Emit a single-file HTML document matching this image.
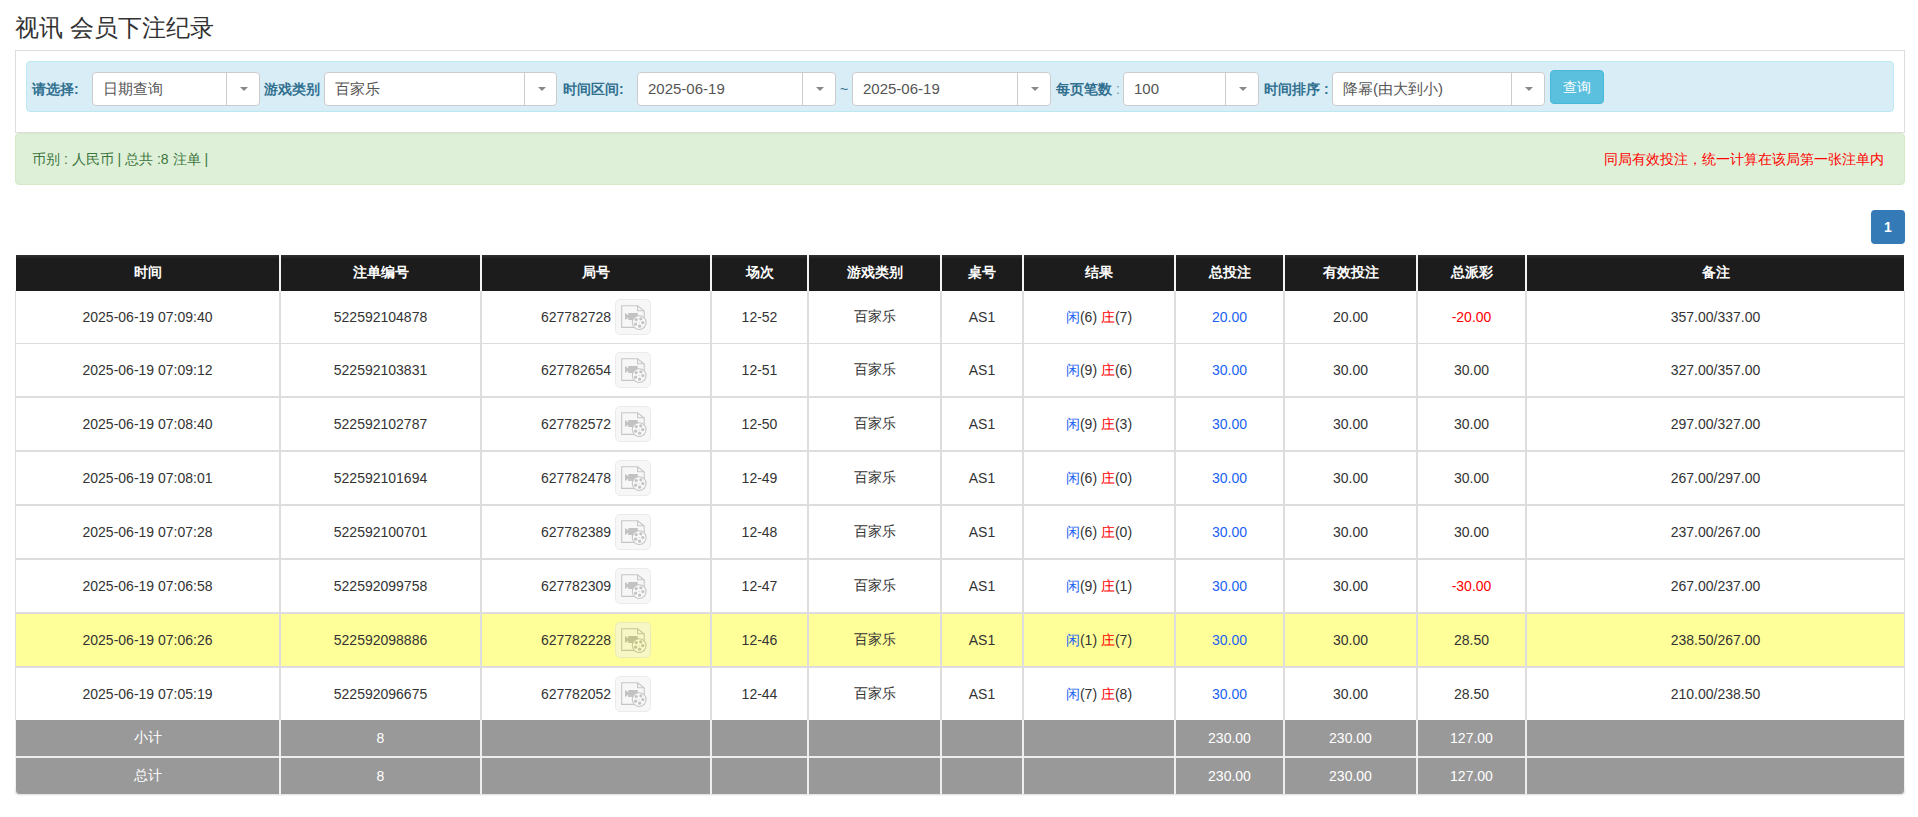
<!DOCTYPE html>
<html><head><meta charset="utf-8">
<style>
*{box-sizing:border-box;}
html,body{margin:0;padding:0;background:#fff;}
body{font-family:"Liberation Sans",sans-serif;font-size:14px;color:#333;width:1918px;height:817px;overflow:hidden;position:relative;}
.abs{position:absolute;}
.title{left:15px;top:13px;font-size:24px;line-height:30px;color:#333;white-space:nowrap;}
.panel{left:15px;top:50px;width:1890px;height:83px;border:1px solid #ddd;border-radius:0;}
.filter{left:26px;top:61px;width:1868px;height:51px;background:#d9edf7;border:1px solid #bce8f1;border-radius:4px;}
.lbl{position:absolute;top:81px;font-size:14px;line-height:17px;font-weight:bold;color:#31708f;white-space:nowrap;}
.sel{position:absolute;top:72px;height:34px;background:#fff;border:1px solid #ccc;border-radius:4px;}
.sel .t{position:absolute;left:10px;top:7px;font-size:15px;line-height:18px;color:#555;white-space:nowrap;}
.sel .d{position:absolute;top:0;bottom:0;width:1px;background:#ccc;}
.sel .c{position:absolute;top:14px;width:0;height:0;border-left:4px solid transparent;border-right:4px solid transparent;border-top:4px solid #888;}
.btn{left:1550px;top:70px;width:54px;height:34px;background:#5bc0de;border:1px solid #46b8da;border-radius:4px;color:#fff;font-size:14px;line-height:32px;text-align:center;}
.alert{left:15px;top:133px;width:1890px;height:52px;background:#dff0d8;border:1px solid #d6e9c6;border-radius:4px;}
.alert .l{position:absolute;left:16px;top:17px;font-size:14px;line-height:17px;color:#3c763d;white-space:nowrap;}
.alert .r{position:absolute;right:20px;top:17px;font-size:14px;line-height:17px;color:#f00;white-space:nowrap;}
.page1{left:1871px;top:210px;width:34px;height:34px;background:#337ab7;border-radius:4px;color:#fff;font-weight:bold;font-size:14px;line-height:34px;text-align:center;}
table{position:absolute;left:15px;top:255px;width:1890px;border-collapse:separate;border-spacing:0;table-layout:fixed;}
th{background:linear-gradient(#303030,#1c1c1c 4px);color:#fff;font-size:14px;font-weight:bold;height:36px;text-align:center;border-left:1px solid #f4f4f4;border-right:1px solid #f4f4f4;padding:0;}
th:first-child{border-left:1px solid #fff;}
th:last-child{border-right:1px solid #fff;}
td{height:54px;text-align:center;border-left:1px solid #ddd;border-right:1px solid #ddd;border-bottom:2px solid #ddd;padding:0;font-size:14px;color:#333;}
tr.r1 td{height:53px;border-bottom-width:1px;}
tr.r8 td{height:52px;border-bottom:none;}
tr.hl td{background:#ffff99;}
tr.sum td{background:#999;color:#fff;height:38px;font-size:14px;border-color:#eee;border-bottom-width:2px;}
tr.sum2 td{height:36px;border-bottom:none;}
tr.sum2 td:first-child{border-bottom-left-radius:4px;}
tr.sum2 td:last-child{border-bottom-right-radius:4px;}
.shadow{left:15px;top:787px;width:1890px;height:7px;border-radius:0 0 4px 4px;box-shadow:0 1px 2px rgba(0,0,0,.14);}
.b{color:#1a62f4;}
.rd{color:#f00;}
.ic{display:inline-block;vertical-align:middle;width:36px;height:36px;border:1px solid #d8d8d8;border-radius:5px;background:#f1f1f1;margin-left:4px;position:relative;opacity:.5;}
</style></head><body>
<div class="abs title">视讯 会员下注纪录</div>
<div class="abs panel"></div>
<div class="abs filter"></div>
<div class="lbl" style="left:32px">请选择:</div>
<div class="sel" style="left:92px;width:168px"><span class="t">日期查询</span><span class="d" style="left:133px"></span><span class="c" style="left:147px"></span></div>
<div class="lbl" style="left:264px">游戏类别</div>
<div class="sel" style="left:324px;width:233px"><span class="t">百家乐</span><span class="d" style="left:199px"></span><span class="c" style="left:213px"></span></div>
<div class="lbl" style="left:563px">时间区间:</div>
<div class="sel" style="left:637px;width:199px"><span class="t">2025-06-19</span><span class="d" style="left:164px"></span><span class="c" style="left:178px"></span></div>
<div class="lbl" style="left:840px;font-weight:normal">~</div>
<div class="sel" style="left:852px;width:199px"><span class="t">2025-06-19</span><span class="d" style="left:164px"></span><span class="c" style="left:178px"></span></div>
<div class="lbl" style="left:1056px">每页笔数 <span style="font-weight:normal;color:#6f95aa">:</span></div>
<div class="sel" style="left:1123px;width:136px"><span class="t">100</span><span class="d" style="left:101px"></span><span class="c" style="left:115px"></span></div>
<div class="lbl" style="left:1264px">时间排序 :</div>
<div class="sel" style="left:1332px;width:213px"><span class="t">降幂(由大到小)</span><span class="d" style="left:178px"></span><span class="c" style="left:192px"></span></div>
<div class="abs btn">查询</div>
<div class="abs alert"><span class="l">币别 : 人民币 | 总共 :8 注单 |</span><span class="r">同局有效投注，统一计算在该局第一张注单内</span></div>
<div class="abs page1">1</div>
<div class="abs shadow"></div>
<table>
<colgroup><col style="width:265px"><col style="width:201px"><col style="width:230px"><col style="width:97px"><col style="width:133px"><col style="width:82px"><col style="width:152px"><col style="width:109px"><col style="width:133px"><col style="width:109px"><col style="width:379px"></colgroup>
<tr><th>时间</th><th>注单编号</th><th>局号</th><th>场次</th><th>游戏类别</th><th>桌号</th><th>结果</th><th>总投注</th><th>有效投注</th><th>总派彩</th><th>备注</th></tr>
<tr class="r1"><td>2025-06-19 07:09:40</td><td>522592104878</td><td><span style="position:relative;top:1px">627782728</span><span class="ic"><svg width="36" height="36" viewBox="0 0 36 36" style="position:absolute;left:-1px;top:-1px"><path d="M6.7 6.7H22.6L29.2 12V28.4H6.7Z" fill="none" stroke="#8f8f8f" stroke-width="1.1"/><path d="M22.6 6.7V11.8H29.2" fill="none" stroke="#8f8f8f" stroke-width="1.1"/><path d="M10 14L13.2 16.2V14H22.8V21H13.2V18.8L10 21Z" fill="#888"/><circle cx="24.2" cy="23.6" r="6.9" fill="#f4f4f4" stroke="#8f8f8f" stroke-width="1.1"/><circle cx="21.2" cy="20.6" r="1.6" fill="#8a8a8a"/><circle cx="25.8" cy="19.8" r="1.6" fill="#8a8a8a"/><circle cx="27.8" cy="23.6" r="1.6" fill="#8a8a8a"/><circle cx="24.6" cy="27.2" r="1.6" fill="#8a8a8a"/><circle cx="20.6" cy="25.2" r="1.6" fill="#8a8a8a"/><circle cx="24.1" cy="23.5" r="0.5" fill="#8a8a8a"/></svg>
</span></td><td>12-52</td><td>百家乐</td><td>AS1</td><td><span style="position:relative;top:1px"><span class="b">闲</span>(6) <span class="rd">庄</span>(7)</span></td><td class="b">20.00</td><td>20.00</td><td class="rd">-20.00</td><td>357.00/337.00</td></tr>
<tr><td>2025-06-19 07:09:12</td><td>522592103831</td><td><span style="position:relative;top:1px">627782654</span><span class="ic"><svg width="36" height="36" viewBox="0 0 36 36" style="position:absolute;left:-1px;top:-1px"><path d="M6.7 6.7H22.6L29.2 12V28.4H6.7Z" fill="none" stroke="#8f8f8f" stroke-width="1.1"/><path d="M22.6 6.7V11.8H29.2" fill="none" stroke="#8f8f8f" stroke-width="1.1"/><path d="M10 14L13.2 16.2V14H22.8V21H13.2V18.8L10 21Z" fill="#888"/><circle cx="24.2" cy="23.6" r="6.9" fill="#f4f4f4" stroke="#8f8f8f" stroke-width="1.1"/><circle cx="21.2" cy="20.6" r="1.6" fill="#8a8a8a"/><circle cx="25.8" cy="19.8" r="1.6" fill="#8a8a8a"/><circle cx="27.8" cy="23.6" r="1.6" fill="#8a8a8a"/><circle cx="24.6" cy="27.2" r="1.6" fill="#8a8a8a"/><circle cx="20.6" cy="25.2" r="1.6" fill="#8a8a8a"/><circle cx="24.1" cy="23.5" r="0.5" fill="#8a8a8a"/></svg>
</span></td><td>12-51</td><td>百家乐</td><td>AS1</td><td><span style="position:relative;top:1px"><span class="b">闲</span>(9) <span class="rd">庄</span>(6)</span></td><td class="b">30.00</td><td>30.00</td><td>30.00</td><td>327.00/357.00</td></tr>
<tr><td>2025-06-19 07:08:40</td><td>522592102787</td><td><span style="position:relative;top:1px">627782572</span><span class="ic"><svg width="36" height="36" viewBox="0 0 36 36" style="position:absolute;left:-1px;top:-1px"><path d="M6.7 6.7H22.6L29.2 12V28.4H6.7Z" fill="none" stroke="#8f8f8f" stroke-width="1.1"/><path d="M22.6 6.7V11.8H29.2" fill="none" stroke="#8f8f8f" stroke-width="1.1"/><path d="M10 14L13.2 16.2V14H22.8V21H13.2V18.8L10 21Z" fill="#888"/><circle cx="24.2" cy="23.6" r="6.9" fill="#f4f4f4" stroke="#8f8f8f" stroke-width="1.1"/><circle cx="21.2" cy="20.6" r="1.6" fill="#8a8a8a"/><circle cx="25.8" cy="19.8" r="1.6" fill="#8a8a8a"/><circle cx="27.8" cy="23.6" r="1.6" fill="#8a8a8a"/><circle cx="24.6" cy="27.2" r="1.6" fill="#8a8a8a"/><circle cx="20.6" cy="25.2" r="1.6" fill="#8a8a8a"/><circle cx="24.1" cy="23.5" r="0.5" fill="#8a8a8a"/></svg>
</span></td><td>12-50</td><td>百家乐</td><td>AS1</td><td><span style="position:relative;top:1px"><span class="b">闲</span>(9) <span class="rd">庄</span>(3)</span></td><td class="b">30.00</td><td>30.00</td><td>30.00</td><td>297.00/327.00</td></tr>
<tr><td>2025-06-19 07:08:01</td><td>522592101694</td><td><span style="position:relative;top:1px">627782478</span><span class="ic"><svg width="36" height="36" viewBox="0 0 36 36" style="position:absolute;left:-1px;top:-1px"><path d="M6.7 6.7H22.6L29.2 12V28.4H6.7Z" fill="none" stroke="#8f8f8f" stroke-width="1.1"/><path d="M22.6 6.7V11.8H29.2" fill="none" stroke="#8f8f8f" stroke-width="1.1"/><path d="M10 14L13.2 16.2V14H22.8V21H13.2V18.8L10 21Z" fill="#888"/><circle cx="24.2" cy="23.6" r="6.9" fill="#f4f4f4" stroke="#8f8f8f" stroke-width="1.1"/><circle cx="21.2" cy="20.6" r="1.6" fill="#8a8a8a"/><circle cx="25.8" cy="19.8" r="1.6" fill="#8a8a8a"/><circle cx="27.8" cy="23.6" r="1.6" fill="#8a8a8a"/><circle cx="24.6" cy="27.2" r="1.6" fill="#8a8a8a"/><circle cx="20.6" cy="25.2" r="1.6" fill="#8a8a8a"/><circle cx="24.1" cy="23.5" r="0.5" fill="#8a8a8a"/></svg>
</span></td><td>12-49</td><td>百家乐</td><td>AS1</td><td><span style="position:relative;top:1px"><span class="b">闲</span>(6) <span class="rd">庄</span>(0)</span></td><td class="b">30.00</td><td>30.00</td><td>30.00</td><td>267.00/297.00</td></tr>
<tr><td>2025-06-19 07:07:28</td><td>522592100701</td><td><span style="position:relative;top:1px">627782389</span><span class="ic"><svg width="36" height="36" viewBox="0 0 36 36" style="position:absolute;left:-1px;top:-1px"><path d="M6.7 6.7H22.6L29.2 12V28.4H6.7Z" fill="none" stroke="#8f8f8f" stroke-width="1.1"/><path d="M22.6 6.7V11.8H29.2" fill="none" stroke="#8f8f8f" stroke-width="1.1"/><path d="M10 14L13.2 16.2V14H22.8V21H13.2V18.8L10 21Z" fill="#888"/><circle cx="24.2" cy="23.6" r="6.9" fill="#f4f4f4" stroke="#8f8f8f" stroke-width="1.1"/><circle cx="21.2" cy="20.6" r="1.6" fill="#8a8a8a"/><circle cx="25.8" cy="19.8" r="1.6" fill="#8a8a8a"/><circle cx="27.8" cy="23.6" r="1.6" fill="#8a8a8a"/><circle cx="24.6" cy="27.2" r="1.6" fill="#8a8a8a"/><circle cx="20.6" cy="25.2" r="1.6" fill="#8a8a8a"/><circle cx="24.1" cy="23.5" r="0.5" fill="#8a8a8a"/></svg>
</span></td><td>12-48</td><td>百家乐</td><td>AS1</td><td><span style="position:relative;top:1px"><span class="b">闲</span>(6) <span class="rd">庄</span>(0)</span></td><td class="b">30.00</td><td>30.00</td><td>30.00</td><td>237.00/267.00</td></tr>
<tr><td>2025-06-19 07:06:58</td><td>522592099758</td><td><span style="position:relative;top:1px">627782309</span><span class="ic"><svg width="36" height="36" viewBox="0 0 36 36" style="position:absolute;left:-1px;top:-1px"><path d="M6.7 6.7H22.6L29.2 12V28.4H6.7Z" fill="none" stroke="#8f8f8f" stroke-width="1.1"/><path d="M22.6 6.7V11.8H29.2" fill="none" stroke="#8f8f8f" stroke-width="1.1"/><path d="M10 14L13.2 16.2V14H22.8V21H13.2V18.8L10 21Z" fill="#888"/><circle cx="24.2" cy="23.6" r="6.9" fill="#f4f4f4" stroke="#8f8f8f" stroke-width="1.1"/><circle cx="21.2" cy="20.6" r="1.6" fill="#8a8a8a"/><circle cx="25.8" cy="19.8" r="1.6" fill="#8a8a8a"/><circle cx="27.8" cy="23.6" r="1.6" fill="#8a8a8a"/><circle cx="24.6" cy="27.2" r="1.6" fill="#8a8a8a"/><circle cx="20.6" cy="25.2" r="1.6" fill="#8a8a8a"/><circle cx="24.1" cy="23.5" r="0.5" fill="#8a8a8a"/></svg>
</span></td><td>12-47</td><td>百家乐</td><td>AS1</td><td><span style="position:relative;top:1px"><span class="b">闲</span>(9) <span class="rd">庄</span>(1)</span></td><td class="b">30.00</td><td>30.00</td><td class="rd">-30.00</td><td>267.00/237.00</td></tr>
<tr class="hl"><td>2025-06-19 07:06:26</td><td>522592098886</td><td><span style="position:relative;top:1px">627782228</span><span class="ic"><svg width="36" height="36" viewBox="0 0 36 36" style="position:absolute;left:-1px;top:-1px"><path d="M6.7 6.7H22.6L29.2 12V28.4H6.7Z" fill="none" stroke="#8f8f8f" stroke-width="1.1"/><path d="M22.6 6.7V11.8H29.2" fill="none" stroke="#8f8f8f" stroke-width="1.1"/><path d="M10 14L13.2 16.2V14H22.8V21H13.2V18.8L10 21Z" fill="#888"/><circle cx="24.2" cy="23.6" r="6.9" fill="#f4f4f4" stroke="#8f8f8f" stroke-width="1.1"/><circle cx="21.2" cy="20.6" r="1.6" fill="#8a8a8a"/><circle cx="25.8" cy="19.8" r="1.6" fill="#8a8a8a"/><circle cx="27.8" cy="23.6" r="1.6" fill="#8a8a8a"/><circle cx="24.6" cy="27.2" r="1.6" fill="#8a8a8a"/><circle cx="20.6" cy="25.2" r="1.6" fill="#8a8a8a"/><circle cx="24.1" cy="23.5" r="0.5" fill="#8a8a8a"/></svg>
</span></td><td>12-46</td><td>百家乐</td><td>AS1</td><td><span style="position:relative;top:1px"><span class="b">闲</span>(1) <span class="rd">庄</span>(7)</span></td><td class="b">30.00</td><td>30.00</td><td>28.50</td><td>238.50/267.00</td></tr>
<tr class="r8"><td>2025-06-19 07:05:19</td><td>522592096675</td><td><span style="position:relative;top:1px">627782052</span><span class="ic"><svg width="36" height="36" viewBox="0 0 36 36" style="position:absolute;left:-1px;top:-1px"><path d="M6.7 6.7H22.6L29.2 12V28.4H6.7Z" fill="none" stroke="#8f8f8f" stroke-width="1.1"/><path d="M22.6 6.7V11.8H29.2" fill="none" stroke="#8f8f8f" stroke-width="1.1"/><path d="M10 14L13.2 16.2V14H22.8V21H13.2V18.8L10 21Z" fill="#888"/><circle cx="24.2" cy="23.6" r="6.9" fill="#f4f4f4" stroke="#8f8f8f" stroke-width="1.1"/><circle cx="21.2" cy="20.6" r="1.6" fill="#8a8a8a"/><circle cx="25.8" cy="19.8" r="1.6" fill="#8a8a8a"/><circle cx="27.8" cy="23.6" r="1.6" fill="#8a8a8a"/><circle cx="24.6" cy="27.2" r="1.6" fill="#8a8a8a"/><circle cx="20.6" cy="25.2" r="1.6" fill="#8a8a8a"/><circle cx="24.1" cy="23.5" r="0.5" fill="#8a8a8a"/></svg>
</span></td><td>12-44</td><td>百家乐</td><td>AS1</td><td><span style="position:relative;top:1px"><span class="b">闲</span>(7) <span class="rd">庄</span>(8)</span></td><td class="b">30.00</td><td>30.00</td><td>28.50</td><td>210.00/238.50</td></tr>
<tr class="sum"><td>小计</td><td>8</td><td></td><td></td><td></td><td></td><td></td><td>230.00</td><td>230.00</td><td>127.00</td><td></td></tr>
<tr class="sum sum2"><td>总计</td><td>8</td><td></td><td></td><td></td><td></td><td></td><td>230.00</td><td>230.00</td><td>127.00</td><td></td></tr>
</table>
</body></html>
